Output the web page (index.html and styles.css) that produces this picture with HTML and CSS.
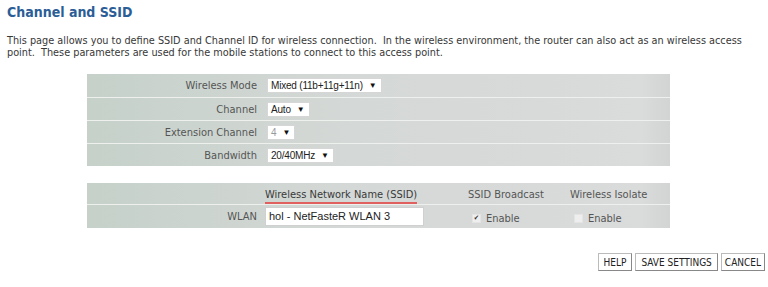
FILE: index.html
```html
<!DOCTYPE html>
<html lang="en">

<head>
    <meta charset="UTF-8">
    <title>Channel and SSID</title>
    <link rel="stylesheet" href="styles.css">
</head>

<body>
    <h2 class="titol">Channel and SSID</h2>
    <p class="intro">This page allows you to define SSID and Channel ID for wireless connection.&nbsp; In the wireless environment, the router can also act as an wireless access point.&nbsp; These parameters are used for the mobile stations to connect to this access point.</p>

    <div class="taula">
        <div class="fila">
            <div class="lbl">Wireless Mode</div>
            <div class="val"><span class="sel">Mixed (11b+11g+11n)<i>&#9660;</i></span></div>
        </div>
        <div class="fila">
            <div class="lbl">Channel</div>
            <div class="val"><span class="sel">Auto<i>&#9660;</i></span></div>
        </div>
        <div class="fila">
            <div class="lbl">Extension Channel</div>
            <div class="val"><span class="sel off">4<i>&#9660;</i></span></div>
        </div>
        <div class="fila">
            <div class="lbl">Bandwidth</div>
            <div class="val"><span class="sel">20/40MHz<i>&#9660;</i></span></div>
        </div>
    </div>

    <div class="taula wlan">
        <div class="fila cap">
            <div class="lbl"></div>
            <div class="c1"><span class="ssid">Wireless Network Name (SSID)</span></div>
            <div class="c2">SSID Broadcast</div>
            <div class="c3">Wireless Isolate</div>
        </div>
        <div class="fila">
            <div class="lbl">WLAN</div>
            <div class="c1"><span class="inp">hol - NetFasteR WLAN 3</span></div>
            <div class="c2"><span class="chk">&#10004;</span>Enable</div>
            <div class="c3"><span class="chk"></span>Enable</div>
        </div>
    </div>

    <div class="botons">
        <button>HELP</button><button>SAVE SETTINGS</button><button class="cancel">CANCEL</button>
    </div>
</body>

</html>
```

FILE: styles.css
```css
*{
    box-sizing: border-box;
}
body{
    margin: 0;
    padding: 5px 7px;
    background: #fff;
    font-family: "DejaVu Sans Condensed", "DejaVu Sans", sans-serif;
    font-size: 11px;
    color: #3a3a3a;
}
.titol{
    margin: 0;
    font-size: 14px;
    line-height: 15px;
    color: #2b5d96;
    font-weight: bold;
}
.intro{
    margin: 15px 0 0;
    line-height: 12px;
    font-size: 10.8px;
    color: #383838;
}
.taula{
    margin: 15px 0 0 80px;
    width: 583px;
    background: linear-gradient(to right, #c6d1ca 0%, #d4d8d6 45%, #dadbdb 95%, #d2d3d3 100%);
}
.fila{
    display: grid;
    grid-template-columns: 170px 1fr;
    align-items: center;
    height: 23px;
    border-top: 1px solid #eef0ee;
}
.fila:first-child{
    border-top: none;
    height: 23px;
}
.lbl{
    text-align: right;
    color: #555;
}
.val{
    padding-left: 10px;
}
.sel{
    display: inline-flex;
    align-items: center;
    height: 15px;
    background: #fff;
    border: 1px solid #d6d6d6;
    padding: 0 4px 0 3px;
    font-family: "Liberation Sans", Arial, sans-serif;
    font-size: 10px;
    letter-spacing: -0.2px;
    color: #222;
}
.sel i{
    font-style: normal;
    font-size: 8px;
    margin-left: 6px;
    color: #111;
}
.sel.off{
    color: #999;
}
.wlan{
    margin-top: 17px;
}
.wlan .fila{
    grid-template-columns: 170px 211px 102px 1fr;
}
.wlan .cap{
    height: 21px;
    padding-top: 1px;
}
.wlan .fila:last-child{
    height: 24px;
}
.c1{
    padding-left: 8px;
}
.c2, .c3{
    display: flex;
    align-items: center;
    color: #555;
}
.ssid{
    border-bottom: 2px solid #e06060;
    padding-bottom: 1px;
}
.inp{
    display: inline-block;
    width: 159px;
    height: 19px;
    line-height: 17px;
    background: #fff;
    border: 1px solid #d0d0d0;
    padding: 0 3px;
    font-family: "Liberation Sans", Arial, sans-serif;
    font-size: 11px;
    color: #222;
}
.wlan .fila:last-child .c2, .wlan .fila:last-child .c3{
    padding-top: 3px;
}
.chk{
    display: inline-flex;
    align-items: center;
    justify-content: center;
    width: 9px;
    height: 9px;
    margin: 0 5px 0 4px;
    border: 1px solid #e4e4e4;
    background: #eeeeee;
    font-size: 7px;
    line-height: 1;
    color: #333;
}
.botons{
    display: flex;
    justify-content: flex-end;
    gap: 3px;
    margin: 25px -4px 0 0;
}
.botons button{
    height: 18px;
    padding: 0 5px;
    background: #fff;
    border: 1px solid #bbb;
    border-right-color: #888;
    border-bottom-color: #888;
    font-family: "DejaVu Sans Condensed", sans-serif;
    font-size: 10px;
    color: #222;
}
.botons .cancel{
    padding: 0 3px;
}
```
